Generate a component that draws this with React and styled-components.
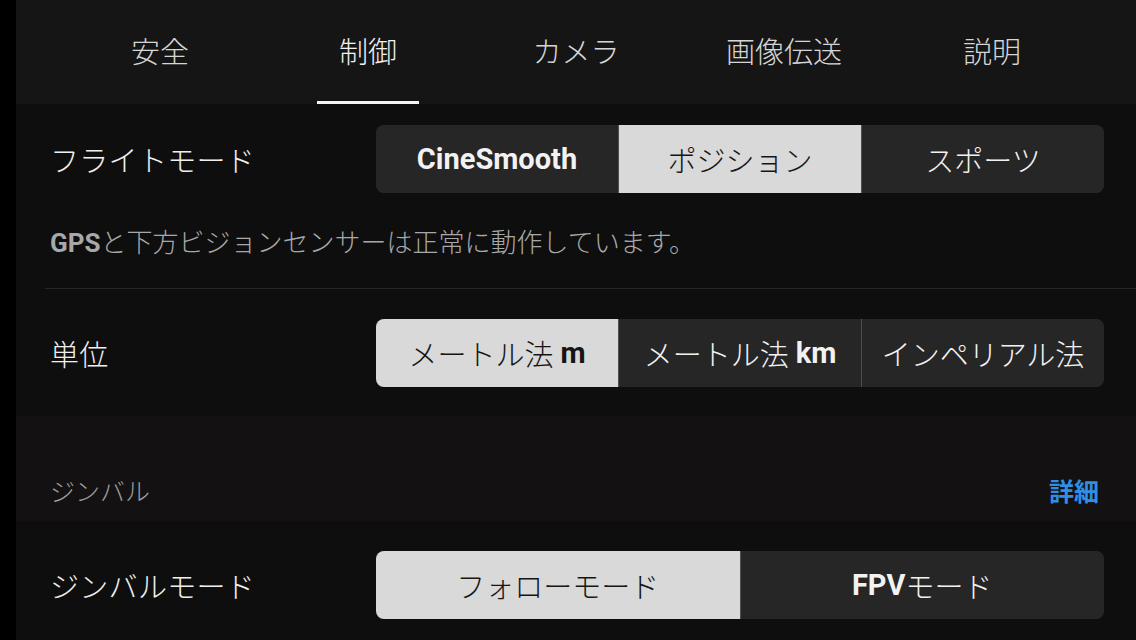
import React from "react";
import styled, { createGlobalStyle } from "styled-components";

const Global = createGlobalStyle`
  html, body { margin: 0; padding: 0; background: #000; }
  body {
    width: 1136px; height: 640px; overflow: hidden;
    font-family: Roboto, "Noto Sans CJK JP", sans-serif;
    font-weight: 300;
    -webkit-font-smoothing: antialiased;
  }
  b { font-weight: 700; }
`;

const Page = styled.div`
  display: flex;
  width: 1136px;
  height: 640px;
  background: #000;
`;

const Strip = styled.div`
  width: 16px;
  flex: none;
  background: #000;
`;

const Main = styled.div`
  flex: 1;
  display: flex;
  flex-direction: column;
  background: #0f0e0e;
  overflow: hidden;
`;

const TabBar = styled.nav`
  height: 104px;
  flex: none;
  display: grid;
  grid-template-columns: repeat(5, 208px);
  padding: 0 40px;
  background: #151515;
`;

const Tab = styled.div`
  position: relative;
  display: flex;
  align-items: center;
  justify-content: center;
  padding-bottom: 4px;
  font-size: 29px;
  color: ${(p) => (p.$active ? "#f2f2f2" : "#d6d6d6")};
  &::after {
    content: "";
    display: ${(p) => (p.$active ? "block" : "none")};
    position: absolute;
    bottom: 0;
    left: 50%;
    width: 102px;
    height: 3px;
    margin-left: -51px;
    background: #f4f4f4;
  }
`;

const Section = styled.section`
  display: flex;
  flex-direction: column;
  padding: 0 32px 0 34px;
`;

const Row = styled.div`
  display: flex;
  align-items: center;
  justify-content: space-between;
  padding: ${(p) => p.$pad || "30px 0 29px"};
`;

const Label = styled.div`
  font-size: 29px;
  color: #f0f0f0;
  letter-spacing: 0.3px;
`;

const Segmented = styled.div`
  display: flex;
  width: 728px;
  height: 68px;
  border-radius: 8px;
  overflow: hidden;
  background: #262626;
  flex: none;
`;

const Segment = styled.div`
  flex: 1;
  display: flex;
  align-items: center;
  justify-content: center;
  font-size: 29px;
  white-space: pre;
  color: ${(p) => (p.$selected ? "#151515" : "#f2f2f2")};
  background: ${(p) => (p.$selected ? "#d9d9d9" : "#262626")};
  & + & {
    border-left: 1px solid #4f4f4f;
  }
`;

const Note = styled.p`
  margin: 35px 0 0;
  font-size: 26px;
  line-height: 30px;
  color: #a8a8a8;
  padding-bottom: 30px;
`;

const Divider = styled.hr`
  margin: 0 -32px 0 -5px;
  border: none;
  border-top: 1px solid #262626;
  height: 0;
`;

const GroupHeader = styled.div`
  height: 105px;
  display: flex;
  align-items: flex-end;
  justify-content: space-between;
  box-sizing: border-box;
  padding: 0 37px 13px 34px;
  background: #131111;
`;

const GroupTitle = styled.div`
  font-size: 25px;
  line-height: 30px;
  color: #9d9d9d;
`;

const Link = styled.div`
  font-size: 25px;
  line-height: 30px;
  font-weight: 700;
  color: #2f8ee6;
`;

const tabs = ["安全", "制御", "カメラ", "画像伝送", "説明"];

export default function App() {
  return (
    <>
      <Global />
      <Page>
        <Strip />
        <Main>
          <TabBar>
            {tabs.map((t, i) => (
              <Tab key={t} $active={i === 1}>
                {t}
              </Tab>
            ))}
          </TabBar>
          <Section>
            <Row $pad="21px 0 0">
              <Label>フライトモード</Label>
              <Segmented>
                <Segment><b>CineSmooth</b></Segment>
                <Segment $selected>ポジション</Segment>
                <Segment>スポーツ</Segment>
              </Segmented>
            </Row>
            <Note>
              <b>GPS</b>と下方ビジョンセンサーは正常に動作しています。
            </Note>
            <Divider />
            <Row>
              <Label>単位</Label>
              <Segmented>
                <Segment $selected>メートル法 <b>m</b></Segment>
                <Segment>メートル法 <b>km</b></Segment>
                <Segment>インペリアル法</Segment>
              </Segmented>
            </Row>
          </Section>
          <GroupHeader>
            <GroupTitle>ジンバル</GroupTitle>
            <Link>詳細</Link>
          </GroupHeader>
          <Section>
            <Row $pad="30px 0 0">
              <Label>ジンバルモード</Label>
              <Segmented>
                <Segment $selected>フォローモード</Segment>
                <Segment><b>FPV</b>モード</Segment>
              </Segmented>
            </Row>
          </Section>
        </Main>
      </Page>
    </>
  );
}
